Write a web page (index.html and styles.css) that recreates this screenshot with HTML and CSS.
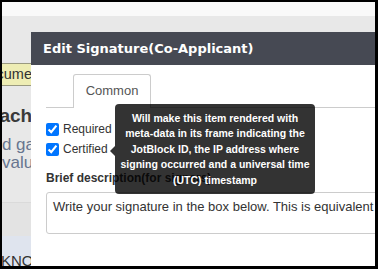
FILE: index.html
```html
<!DOCTYPE html>
<html>
<head>
<meta charset="utf-8">
<link rel="stylesheet" href="styles.css">
</head>
<body>
<div class="frame">
  <div class="topbar"></div>
  <div class="backdrop">
    <aside class="side">
      <div class="badge">Documents</div>
      <div class="side-title">Attach</div>
      <div class="side-text side-text-shift">and gallery</div>
      <div class="side-text">values</div>
      <div class="side-gap"></div>
      <div class="side-foot">KNOWLEDGE</div>
    </aside>
  </div>
  <section class="dialog">
    <header class="dlg-head">Edit Signature(Co-Applicant)</header>
    <div class="dlg-body">
      <nav class="tabs"><span class="tab">Common</span><span class="tab-rest"></span></nav>
      <label class="check"><input type="checkbox" checked> Required</label>
      <label class="check"><input type="checkbox" checked> Certified</label>
      <div class="field-label">Brief description(for signers)</div>
      <div class="textarea">Write your signature in the box below. This is equivalent to a handwritten signature.</div>
    </div>
  </section>
  <div class="tooltip">Will make this item rendered with meta-data in its frame indicating the JotBlock ID, the IP address where signing occurred and a universal time (UTC) timestamp</div>
</div>
</body>
</html>
```

FILE: styles.css
```css
* { box-sizing: border-box; }
html, body { margin: 0; padding: 0; background: #000; }
body { font-family: "Liberation Sans", Arial, sans-serif; }

.frame {
  position: relative;
  width: 378px;
  height: 269px;
  border-style: solid;
  border-color: #000;
  border-width: 2px 3px 3px 2px;
  overflow: hidden;
  background: #e8e8e8;
  display: flex;
  flex-direction: column;
}

.topbar {
  height: 14px;
  flex: none;
  background: #f9f9f9;
}

.backdrop {
  flex: 1;
  display: flex;
  background: #e8e8e8;
}

.side {
  width: 29px;
  overflow: hidden;
  display: flex;
  flex-direction: column;
  padding-top: 47px;
}

.badge {
  height: 23px;
  margin-left: -27px;
  width: 70px;
  flex: none;
  background: #eeedb4;
  border: 1px solid #9a9a80;
  font-size: 14.5px;
  line-height: 21px;
  color: #333;
  padding-left: 2px;
  white-space: nowrap;
}

.side-title {
  margin-top: 19px;
  margin-left: -29px;
  font-size: 19px;
  font-weight: bold;
  color: #3a3a3a;
  line-height: 22px;
  white-space: nowrap;
}

.side-text {
  font-size: 17px;
  line-height: 18px;
  color: #67758f;
  white-space: nowrap;
}

.side-text-shift {
  margin-top: 9px;
  margin-left: -19px;
}

.side-gap {
  margin-top: 30px;
  height: 34px;
  flex: none;
  background: #e3e3e3;
  border-top: 1px solid #dadada;
}

.side-foot {
  flex: 1;
  background: #dfe4ee;
  font-size: 15px;
  line-height: 17px;
  color: #333;
  padding-top: 16px;
  text-indent: -1px;
  white-space: nowrap;
}

.dialog {
  position: absolute;
  left: 29px;
  top: 30px;
  width: 400px;
  bottom: 0;
  background: #fff;
  display: flex;
  flex-direction: column;
}

.dlg-head {
  height: 33px;
  flex: none;
  background: #464953;
  color: #fff;
  font-family: "DejaVu Sans", Verdana, sans-serif;
  font-weight: bold;
  font-size: 13px;
  line-height: 33px;
  padding-left: 12px;
  white-space: nowrap;
}

.dlg-body {
  flex: 1;
  padding: 9px 0 0 15px;
  display: flex;
  flex-direction: column;
}

.tabs {
  display: flex;
  align-items: flex-end;
  height: 34px;
  flex: none;
}

.tabs::before {
  content: "";
  width: 27px;
  border-bottom: 1px solid #ccc;
}

.tab {
  width: 78px;
  height: 34px;
  border: 1px solid #ccc;
  border-bottom: none;
  border-radius: 3px 3px 0 0;
  font-size: 13px;
  color: #555;
  text-align: center;
  line-height: 31px;
}

.tab-rest {
  flex: 1;
  border-bottom: 1px solid #ccc;
}

.check {
  display: flex;
  align-items: center;
  gap: 4px;
  font-size: 12px;
  color: #333;
  height: 20px;
  flex: none;
}

.tabs + .check { margin-top: 11px; }

.check input {
  margin: 0;
  width: 13px;
  height: 13px;
}

.field-label {
  margin-top: 12px;
  font-size: 12px;
  font-weight: bold;
  color: #333;
  white-space: nowrap;
}

.textarea {
  margin-top: 7px;
  height: 42px;
  flex: none;
  border: 1px solid #ccc;
  border-radius: 3px;
  font-size: 13px;
  color: #333;
  padding: 6px 6px;
  white-space: nowrap;
  overflow: hidden;
}

.tooltip {
  position: absolute;
  left: 113px;
  top: 102px;
  width: 200px;
  padding: 7px 5px 6px;
  background: rgba(0, 0, 0, 0.8);
  color: #fff;
  border-radius: 4px;
  font-size: 10.5px;
  font-weight: bold;
  line-height: 15.4px;
  text-align: center;
}

.tooltip::before {
  content: "";
  position: absolute;
  left: -5px;
  top: 42px;
  border-style: solid;
  border-width: 5px 5px 5px 0;
  border-color: transparent rgba(0, 0, 0, 0.8) transparent transparent;
}
```
